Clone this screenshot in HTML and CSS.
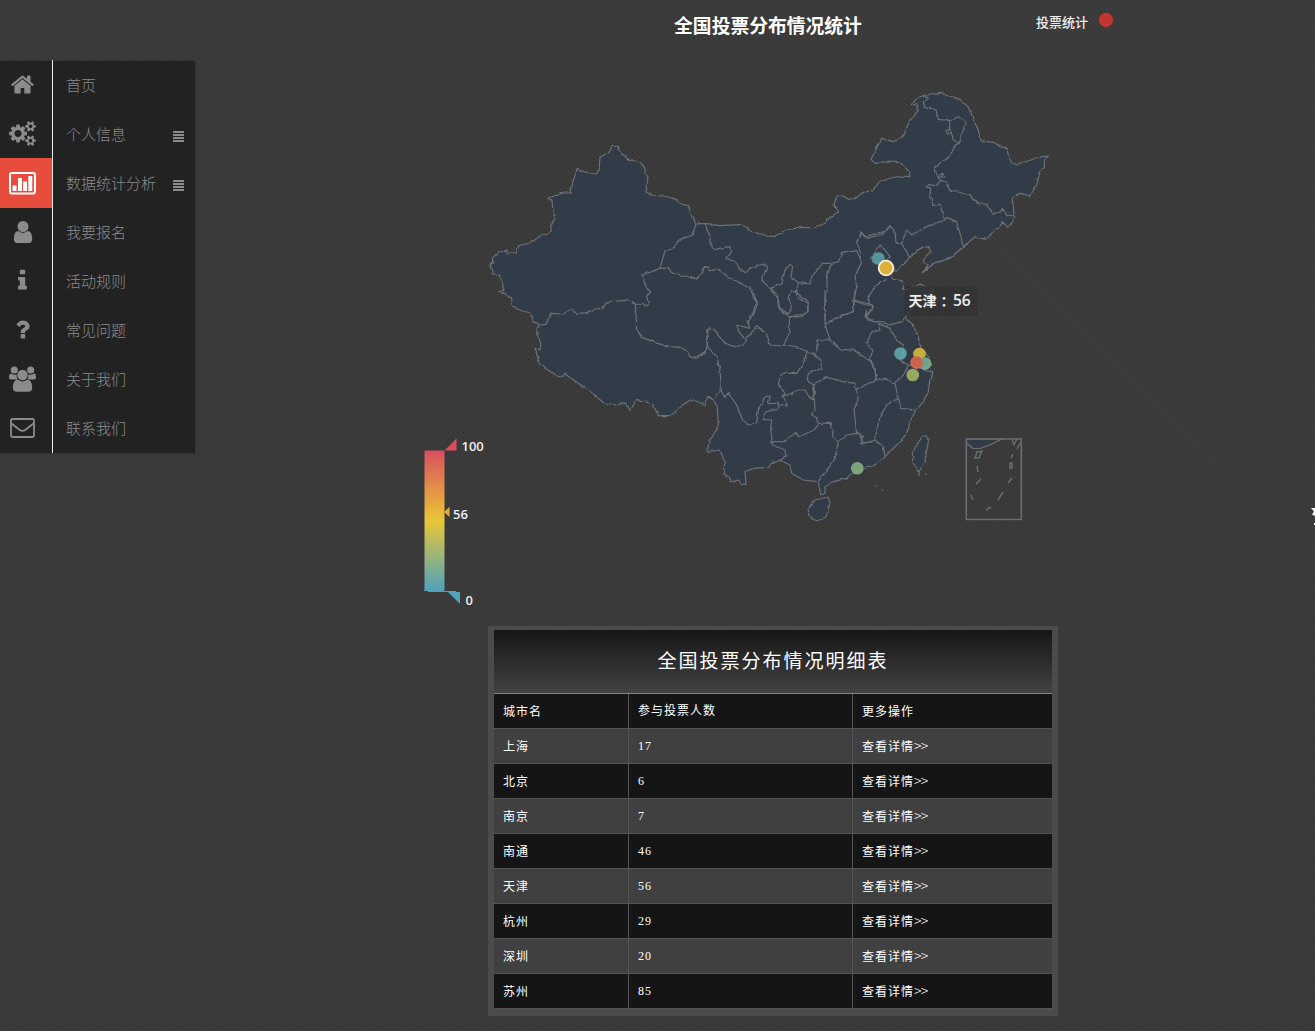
FILE: index.html
```html
<!DOCTYPE html>
<html lang="zh-CN">
<head>
<meta charset="utf-8">
<title>全国投票分布情况统计</title>
<link rel="stylesheet" href="styles.css">
</head>
<body>
<nav class="sidebar">
  <div class="icons">
    <span><svg class="fa" viewBox="0 0 1792 1792"><path d="M1472 992v480q0 26-19 45t-45 19h-384v-384h-256v384h-384q-26 0-45-19t-19-45v-480q0-1 .5-3t.5-3l575-474 575 474q1 2 1 6zm223-69l-62 74q-8 9-21 11h-3q-13 0-21-7l-692-577-692 577q-12 8-24 7-13-2-21-11l-62-74q-8-10-7-23.500t11-21.500l719-599q32-26 76-26t76 26l244 204v-195q0-14 9-23t23-9h192q14 0 23 9t9 23v408l219 182q10 8 11 21.500t-7 23.500z"/></svg></span>
    <span><svg class="fa wide" viewBox="0 0 1920 1792"><path d="M896 896q0-106-75-181t-181-75-181 75-75 181 75 181 181 75 181-75 75-181zm768 512q0-52-38-90t-90-38-90 38-38 90q0 53 37.500 90.500t90.500 37.500 90.500-37.500 37.500-90.500zm0-1024q0-52-38-90t-90-38-90 38-38 90q0 53 37.500 90.500t90.500 37.500 90.500-37.500 37.500-90.500zm-384 421v185q0 10-7 19.500t-16 10.500l-155 24q-11 35-32 76 34 48 90 115 7 11 7 20 0 12-7 19-23 30-82.500 89.500t-78.500 59.500q-11 0-21-7l-115-90q-37 19-77 31-11 108-23 155-7 24-30 24h-186q-11 0-20-7.500t-10-17.500l-23-153q-34-10-75-31l-118 89q-7 7-20 7-11 0-21-8-144-133-144-160 0-9 7-19 10-14 41-53t47-61q-23-44-35-82l-152-24q-10-1-17-9.500t-7-19.500v-185q0-10 7-19.500t16-10.500l155-24q11-35 32-76-34-48-90-115-7-11-7-20 0-12 7-20 22-30 82-89t79-59q11 0 21 7l115 90q34-18 77-32 11-108 23-154 7-24 30-24h186q11 0 20 7.500t10 17.500l23 153q34 10 75 31l118-89q8-7 20-7 11 0 21 8 144 133 144 160 0 8-7 19-12 16-42 54t-45 60q23 48 34 82l152 23q10 2 17 10.500t7 19.500zm640 533v140q0 16-149 31-12 27-30 52 51 113 51 138 0 4-4 7-122 71-124 71-8 0-46-47t-52-68q-20 2-30 2t-30-2q-14 21-52 68t-46 47q-2 0-124-71-4-3-4-7 0-25 51-138-18-25-30-52-149-15-149-31v-140q0-16 149-31 13-29 30-52-51-113-51-138 0-4 4-7 4-2 35-20t59-34 30-16q8 0 46 46.500t52 67.500q20-2 30-2t30 2q51-71 92-112l6-2q4 0 124 70 4 3 4 7 0 25-51 138 17 23 30 52 149 15 149 31zm0-1024v140q0 16-149 31-12 27-30 52 51 113 51 138 0 4-4 7-122 71-124 71-8 0-46-47t-52-68q-20 2-30 2t-30-2q-14 21-52 68t-46 47q-2 0-124-71-4-3-4-7 0-25 51-138-18-25-30-52-149-15-149-31v-140q0-16 149-31 13-29 30-52-51-113-51-138 0-4 4-7 4-2 35-20t59-34 30-16q8 0 46 46.500t52 67.500q20-2 30-2t30 2q51-71 92-112l6-2q4 0 124 70 4 3 4 7 0 25-51 138 17 23 30 52 149 15 149 31z"/></svg></span>
    <span class="active"><svg width="27" height="23" viewBox="0 0 27 23"><rect x="1" y="1" width="25" height="20.500" rx="2" fill="none" stroke="currentColor" stroke-width="2"/><path d="M3.500 13.500h4v5.500h-4zM9 6h4v13H9zM14 9.500h4V19h-4zM19.300 4h4v15h-4z"/></svg></span>
    <span><svg class="fa user" viewBox="128 128 1536 1536"><path d="M1536 1399q0 109-62.500 187t-150.500 78h-854q-88 0-150.500-78t-62.500-187q0-85 8.500-160.500t31.500-152 58.500-131 94-89 134.500-34.500q131 128 313 128t313-128q76 0 134.500 34.500t94 89 58.500 131 31.500 152 8.500 160.500zm-256-887q0 159-112.500 271.500t-271.500 112.500-271.500-112.500-112.500-271.500 112.500-271.500 271.500-112.500 271.500 112.500 112.500 271.500z"/></svg></span>
    <span><svg class="fa" viewBox="0 0 1792 1792"><path d="M1216 1344v128q0 26-19 45t-45 19h-512q-26 0-45-19t-19-45v-128q0-26 19-45t45-19h64v-384h-64q-26 0-45-19t-19-45v-128q0-26 19-45t45-19h384q26 0 45 19t19 45v576h64q26 0 45 19t19 45zm-128-1152v192q0 26-19 45t-45 19h-256q-26 0-45-19t-19-45v-192q0-26 19-45t45-19h256q26 0 45 19t19 45z"/></svg></span>
    <span><svg class="fa" viewBox="0 0 1792 1792"><path d="M1088 1256v240q0 16-12 28t-28 12h-240q-16 0-28-12t-12-28v-240q0-16 12-28t28-12h240q16 0 28 12t12 28zm316-600q0 54-15.500 101t-35 76.500-55 59.500-57.500 43.500-61 35.500q-41 23-68.500 65t-27.500 67q0 17-12 32.500t-28 15.500h-240q-15 0-25.500-18.500t-10.500-37.500v-45q0-83 65-156.500t143-108.500q59-27 84-56t25-76q0-42-46.500-74t-107.500-32q-65 0-108 29-35 25-107 115-13 16-31 16-12 0-25-8l-164-125q-13-10-15.500-25t5.500-28q160-266 464-266 80 0 161 31t146 83 106 127.500 41 158.500z"/></svg></span>
    <span><svg width="27" height="26" viewBox="0 0 27 26"><circle cx="5.300" cy="4" r="3.600"/><circle cx="21.700" cy="4" r="3.600"/><path d="M7.500 13.500H3Q0 13.500 0 11.500 0 7.500 2 7.500 5 9.500 7.800 8.500q-.6 2.800.9 5zM19.500 13.500H24q3 0 3-2 0-4-2-4-3 2-5.800 1 .6 2.800-.9 5z"/><circle cx="13.500" cy="9" r="5.200"/><path d="M9 13.800q4.500 3.400 9 0 5.200 0 5.200 7.500 0 4.500-4 4.500H7.800q-4 0-4-4.500 0-7.500 5.200-7.500z"/></svg></span>
    <span><svg width="25" height="20" viewBox="0 0 25 20" fill="none" stroke="currentColor" stroke-width="1.800"><rect x="1" y="1" width="23" height="18" rx="1.500"/><path d="M1 5q4 3.300 8.500 6.800 3 2.300 6 0Q20 8.300 24 5"/></svg></span>
  </div>
  <ul class="labels">
    <li>首页</li>
    <li>个人信息<i class="bars"></i></li>
    <li>数据统计分析<i class="bars"></i></li>
    <li>我要报名</li>
    <li>活动规则</li>
    <li>常见问题</li>
    <li>关于我们</li>
    <li>联系我们</li>
  </ul>
</nav>
<main>
  <svg class="chart" width="740" height="620" viewBox="400 0 740 620">
    <defs>
      <linearGradient id="heat" x1="0" y1="0" x2="0" y2="1"><stop offset="0" stop-color="#d94e5d"/><stop offset=".5" stop-color="#eac736"/><stop offset="1" stop-color="#50a3ba"/></linearGradient>
      <filter id="coast" x="-5%" y="-5%" width="110%" height="110%" color-interpolation-filters="sRGB"><feTurbulence type="fractalNoise" baseFrequency=".2" numOctaves="1" seed="4"/><feDisplacementMap in="SourceGraphic" scale="3.500" xChannelSelector="R" yChannelSelector="G"/></filter>
    </defs>
    <text class="title" x="768" y="33">全国投票分布情况统计</text>
    <text class="legend" x="1036" y="27">投票统计</text>
    <circle cx="1106" cy="20" r="7.200" fill="#c23531"/>

    <g class="land" filter="url(#coast)">
      <path class="country" d="M696 224 693 217 688 206 682 204 673 198 663 196 653 195.500 646 193 647 185 648 177 644 167 641.500 162.500 635 161 630 160.500 625 156.500 619 150.500 619 146.500 612 146.500 609 152.500 600 157 599 170.500 595 174 587 172.500 577 169.500 575 175 570 190 571.500 193 563 193 548 198 552 201 553 212 555.500 218 551 224 551 231.500 540 236.500 530 243 519 245.500 516 252.500 508 253 507 250 498 253 492.500 257.500 492.500 263 490 265 492.500 274 500 275 502 282 504 290 498 292 505 294 511.500 298 512.500 306 523 311.500 530.500 312.500 532 320.500 538.300 325 536.700 330 540.700 343.300 540 350 535 348.300 540 365 559.300 377.300 565 374 583.300 386.700 595 395 603.300 402.700 615 405 626.700 403.300 630 411 636.700 399.300 652.700 404 658.300 415.700 671.700 415.700 680 406.700 691.700 399.300 705 405 708.300 396.700 712.700 400 717.300 406.700 718.300 427.300 709.300 440 707.300 451.700 720 450 725 463.300 723.300 472.700 732.700 481.700 739.300 480 741.700 484.300 746 484.300 745 471.700 753.300 468.300 766.700 467.300 779.300 460 790 465 791.700 473.300 803.300 480 818.300 481.700 820.700 495 825 493.300 825 486.700 833.300 481.700 846.700 478.300 850 475 860 470 873.300 465.700 881.700 460 890 451.700 900 441.700 908.300 431.700 909.300 423.300 915 411.700 923.300 401.700 928.300 391.700 930 380 931.700 371.700 923.300 370 930.700 365 928.300 356.700 920.700 348.300 918.300 336.700 913.300 325 905 317.300 915 305 926.700 296.700 934 290 920 284 911.700 288.300 904.300 290 901.700 280.700 893.300 279.300 890 275 896.700 270 905 263.300 909.300 257.300 915 253.300 921.700 247.300 928.300 246.700 931 251.700 925 256.700 923.300 261.700 928.300 265 923.300 272.300 935 262.700 950 258.300 963.300 246.700 975 236.700 986 239.300 991.700 233.300 998.300 228.300 1002.700 222.300 1008.300 227.700 1013.300 220 1014 213.300 1012.300 198.300 1020 193.300 1030 196 1036.700 185 1040 171.700 1044.300 167.300 1044.300 160 1048 155.300 1033.300 159 1023.300 163.300 1012.300 164 1009.300 158.300 1006.700 149 993.300 142.300 981 140.700 978.300 130 973.300 119.300 968.300 107.300 960 99.300 950 96.700 941.700 93.300 925 95 916.700 98.300 911.700 104.300 917.700 105 918.300 110.700 910 120 904 135 893.300 141.700 881.700 138.300 871 159.300 875 163.300 888.300 161 899.300 161.700 908.300 170.700 910 176.700 901.700 176 890 178 878.300 183 872.700 191 863.300 192.300 855 198.700 848.300 199.300 843.300 196 836.700 196 834 205 838.700 212 830 217.300 825 223.300 815 227.300 800 227.700 786.700 230 773.300 236.700 760 234 750 230.700 746 226.700 740 224.700 720 225.700 705 223.300Z"/>
      <g class="borders">
        <!-- 西部 -->
        <path transform="translate(480 130) scale(.33333)" d="M175 585 198 583 212 550 250 552 275 538 290 550 320 548 345 537 368 535 378 520 410 513 440 511 465 522 505 525 500 498 512 487 495 465 490 442 484 436 540 415 555 362 577 357 600 328 640 315 645 290 648 282M465 522 468 545 470 600 485 622 520 635 560 650 603 652 622 665 630 680 648 685 660 675 680 660 682 640 680 600 690 592M540 415 565 415 575 425 600 435 650 447 662 435 668 415 690 410"/>
        <!-- 西北、华北 -->
        <path transform="translate(690 80) scale(.33333)" d="M45 430 60 470 60 490 75 510 95 503 120 500 125 515 110 535 140 550 150 570 168 578 180 565 220 552 232 560 215 600 240 625 262 640 265 680 295 702 305 680 295 650 305 635 320 636M0 590 20 595 38 580 40 560 60 572 85 568 120 595 150 610 180 625 190 650 200 670 180 715M240 625 275 612 285 570 300 553 308 560 303 590 325 608 320 638 355 665 352 700 325 705 298 712M325 608 360 612 365 590 400 550 425 550 410 590 412 620 405 660 405 720M425 550 445 545 455 520 500 512 515 545 495 590 500 620 492 660 490 695 460 705 435 718M512 520 500 485 515 457 530 475 580 462 600 440M492 660 538 672 535 650 560 615 590 598M538 672 550 680 525 710"/>
        <!-- 东北 -->
        <path transform="translate(860 80) scale(.33333)" d="M40 525 60 495 75 510 90 530 75 545 40 548 32 535ZM0 457 15 470 50 460 75 455 90 437 105 455 108 485 125 490 148 532M125 490 140 448 155 465 200 440 255 420 248 405 240 372 220 378 210 345 212 325 200 320 205 313 230 318 240 305 262 308 268 330 330 345 355 372 380 372 400 403 430 388 440 405 462 408M255 410 290 425 300 460 310 500M240 300 220 262 270 230 285 195 298 190 280 180 270 150 268 122 235 118 228 90 195 80 190 68 205 55 195 47M268 122 300 110 318 130 305 165 298 190M258 152 268 148 274 157 262 162ZM240 300 236 288 248 280 253 290 240 292M90 545 105 570"/>
        <!-- 西南、华中 -->
        <path transform="translate(700 290) scale(.33333)" d="M158 0 172 45 160 75 145 95 148 115 110 105 120 130 140 150 130 165 105 170 75 160 50 130 40 115 25 118 20 150 22 170 50 200 60 240 65 305M0 200 15 190 22 170M38 330 60 300 75 320 85 310 110 345 130 395 150 405 170 395 175 360 195 320 210 318 205 340 235 340 232 358 195 365 190 388 215 390 212 420 218 465M140 145 170 110 200 130 210 165 250 168 268 130 268 80 240 60 235 30 215 0M268 80 300 80 325 65 322 40 290 20 290 0M250 165 290 170 320 185 345 195 362 210 365 235 325 250 322 270 340 285 342 330 330 325 315 300 295 300 250 320 262 345 235 345M320 188 310 220 290 250 245 250 235 280 255 310 250 320M345 195 355 165 350 150 390 150 375 100 375 0M375 100 420 78 460 65 465 0M462 33 500 45 520 50 500 80 520 98M390 150 420 178 465 180 480 195 510 210 525 240 528 268M342 285 350 278 380 262 430 275 465 280 468 298 530 268M342 285 345 365 335 375 350 385 355 410M218 465 215 455 250 455 285 430 300 440 350 415 355 400 390 400 400 440 415 455 440 435 470 430 488 435 480 460 520 455M468 298 475 325 462 360 470 430M415 455 405 505 385 535 355 575M218 465 255 480 258 500 238 512"/>
        <!-- 华东 -->
        <path transform="translate(840 310) scale(.33333)" d="M80 0 75 20 90 35 120 35 150 45 185 35 195 22M115 40 150 55 170 90 190 105 190 130 180 150 205 165M115 40 120 62 95 65 80 100 98 120 90 148 105 175 108 210 130 205 165 220 190 195 205 165 255 178M165 220 175 265 140 285 120 320 105 390 130 410 135 440M175 265 185 295 225 300M60 370 70 400 105 390"/>
      </g>
      <path class="country" d="M808 508 815 500 828 497 830 503 826 517 817 521 809 517ZM921.700 437 927 435 929 438 925 460 919 472 913 463 912.300 453Z"/>
      <path class="country" d="M919 472v4M925 474h1M875 486h1.500M882 490h1.500M933 380h1M931 374h2M934 369h1M936 266h1"/>
    </g>
    <g class="inset">
      <path class="country" d="M966.500 439 1002 439Q991 445 980 448.500H973L966.500 443ZM1012 439 1014 445 1017 439"/>
      <path d="M966.300 439h55v80.500h-55z" stroke-width="1.600"/>
      <path stroke-width="1.500" d="m977 452 5-1-3 7h-4zM977 466l1 6M981 479l-5 5M971 495l2 5M991 507l-5 3M1003 492l-5 8M1012 478l-4 5M1010 463h2v5h-2zM1013 454l-2 4M1020 443l-3 6"/>
    </g>
    <g opacity=".86">
      <circle cx="878.500" cy="258.500" r="6.300" fill="#5ba5a8"/>
      <circle cx="900.500" cy="353.500" r="6.300" fill="#60aeb0"/>
      <circle cx="919.500" cy="354" r="6.300" fill="#dfc13c"/>
      <circle cx="925" cy="363.500" r="6.300" fill="#7cb393"/>
      <circle cx="916.500" cy="362.500" r="6.300" fill="#e36b50"/>
      <circle cx="912.800" cy="375" r="6.300" fill="#a9ba67"/>
      <circle cx="857.300" cy="468.300" r="6.300" fill="#8bb584"/>
    </g>
    <circle cx="886" cy="268" r="7.300" fill="#dcb03b" stroke="#f6efdc" stroke-width="1.800"/>
    <rect x="904.500" y="286" width="73" height="30" rx="3" fill="#323232" fill-opacity=".8"/>
    <text class="tip" x="908.500" y="306">天津<tspan x="940.500">：</tspan><tspan class="num" x="953">56</tspan></text>

    <rect x="424.500" y="450.500" width="20" height="139.500" fill="url(#heat)"/>
    <path d="M444.500 450.500 456.500 438.500V450.500Z" fill="#d94e5d"/>
    <path d="M444 512 449.500 507V517Z" fill="#deb03d"/>
    <path d="M448 592H460V604Z" fill="#50a3ba"/><path d="M424 590.500h20M428 591.500h28" stroke="#50a3ba"/>
    <g class="scale"><text x="461.500" y="451">100</text><text x="453" y="519">56</text><text x="465.500" y="605">0</text></g>
  </svg>

  <table>
    <caption>全国投票分布情况明细表</caption>
    <colgroup><col class="city"><col class="count"><col></colgroup>
    <tbody>
      <tr><td>城市名</td><td>参与投票人数</td><td>更多操作</td></tr>
      <tr><td>上海</td><td>17</td><td>查看详情<b>&gt;&gt;</b></td></tr>
      <tr><td>北京</td><td>6</td><td>查看详情<b>&gt;&gt;</b></td></tr>
      <tr><td>南京</td><td>7</td><td>查看详情<b>&gt;&gt;</b></td></tr>
      <tr><td>南通</td><td>46</td><td>查看详情<b>&gt;&gt;</b></td></tr>
      <tr><td>天津</td><td>56</td><td>查看详情<b>&gt;&gt;</b></td></tr>
      <tr><td>杭州</td><td>29</td><td>查看详情<b>&gt;&gt;</b></td></tr>
      <tr><td>深圳</td><td>20</td><td>查看详情<b>&gt;&gt;</b></td></tr>
      <tr><td>苏州</td><td>85</td><td>查看详情<b>&gt;&gt;</b></td></tr>
    </tbody>
  </table>
</main>
<svg class="edge" width="4" height="18" viewBox="0 0 4 18"><path d="M0 1H4V9L1 7.500 3 4.500ZM3 16H4V18H3Z"/></svg>
</body>
</html>
```
FILE: styles.css
```css
* { box-sizing: border-box; }
body {
  margin: 0;
  height: 1031px;
  overflow: hidden;
  display: flex;
  align-items: flex-start;
  background: #3b3b3b repeating-linear-gradient(45deg, #383838 0 1.600px, #3d3d3d 1.600px 3.535px);
  font-family: "Noto Sans CJK SC", sans-serif;
}
.sidebar {
  display: flex;
  flex: none;
  width: 195px;
  height: 392px;
  margin-top: 61px;
  background: #222;
  box-shadow: 0 0 2px #2a2a2a;
  color: #8b8b8b;
}
.icons { width: 53px; margin-top: -1px; border-right: 1px solid #eee; }
.icons span {
  display: flex;
  align-items: center;
  justify-content: center;
  height: 49px;
  padding-right: 7px;
}
.icons .active { height: 50px; margin-bottom: -1px; background: #e84c3d; color: #fff; }
.icons svg { fill: currentColor; }
.icons svg[fill="none"] { fill: none; }
.fa { width: 25px; height: 25px; }
.fa.wide { width: 27px; }
.fa.user { width: 24px; height: 22px; }
.labels { flex: 1; margin: -1px 0 0; padding: 0; list-style: none; }
.labels li {
  display: flex;
  align-items: center;
  justify-content: space-between;
  height: 49px;
  padding: 0 11px 0 13px;
  font-size: 15px;
  font-weight: 300;
}
.bars {
  width: 11px;
  height: 11px;
  margin-top: 5px;
  background: repeating-linear-gradient(#8b8b8b 0 2px, #222 2px 3px);
}
main { flex: none; width: 945px; padding-left: 205px; }
.chart { display: block; }
.chart text { fill: #eee; }
.chart .title { font-size: 18.800px; font-weight: 700; text-anchor: middle; fill: #fff; }
.chart .legend { font-size: 13px; font-weight: 500; }
.chart .tip { font-size: 14px; font-weight: 600; }
.tip .num { font: 600 15.500px "Open Sans", sans-serif; }
.scale { font: 600 13px "Open Sans", sans-serif; }
.country { fill: #323c48; stroke: #6d7176; stroke-width: 1.200; stroke-linejoin: round; }
.borders path { fill: none; stroke: #6d7176; stroke-width: 1.200; vector-effect: non-scaling-stroke; stroke-linejoin: round; }
.inset path:not(.country) { fill: none; stroke: #696c70; }
table {
  width: 570px;
  margin: 6px 0 0 88px;
  padding: 4px 6px 7px 6px;
  display: grid;
  background: #4b4b4b;
  box-shadow: 0 0 1px #4b4b4b;
  color: #fff;
  font-size: 12px;
  letter-spacing: 1px;
}
caption, tbody, tr { display: grid; }
caption {
  height: 64px;
  padding-bottom: 4px;
  place-items: center;
  border-bottom: 1px solid #858585;
  background: linear-gradient(#161616, #424242);
  font-size: 19px;
  letter-spacing: 2px;
}
colgroup { display: none; }
tr { grid-template-columns: 135px 224px 1fr; height: 35px; background: #151515; border-bottom: 1px solid #555; }
tr:nth-child(even) { background: #404040; }
td { padding: 1px 9px 0; height: 34px; line-height: 34px; border-right: 1px solid #555; font-family: "Liberation Serif", "Noto Sans CJK SC", serif; }
td:nth-child(2) { line-height: 33px; }
td:last-child { border-right: 0; }
td b { font: 300 14px/1 "Noto Sans CJK SC", sans-serif; letter-spacing: -.8px; }
.edge { position: absolute; right: 0; top: 507px; fill: #fff; }
```
